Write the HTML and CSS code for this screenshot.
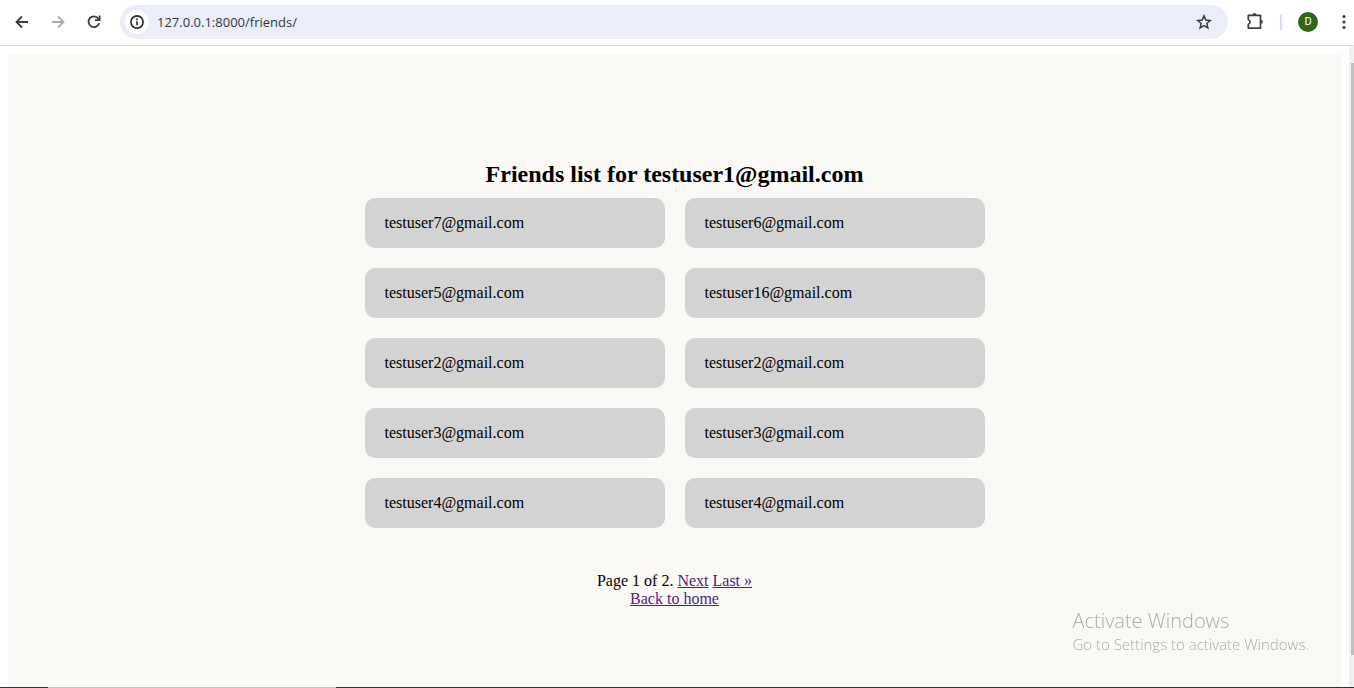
FILE: index.html
```html
<!DOCTYPE html>
<html lang="en">
<head>
<meta charset="utf-8">
<title>Friends</title>
<link rel="stylesheet" href="styles.css">
</head>
<body>
<header class="toolbar">
  <nav class="nav-buttons">
    <button class="icon-button" type="button" aria-label="Back">
      <svg width="14" height="14" viewBox="0 0 14 14" fill="none" stroke="#3c3d3f" stroke-width="1.8"><path d="M13 7H1.8M7 1.5 1.5 7 7 12.5"/></svg>
    </button>
    <button class="icon-button" type="button" aria-label="Forward">
      <svg width="14" height="14" viewBox="0 0 14 14" fill="none" stroke="#a9a9a9" stroke-width="1.8"><path d="M1 7h11.2M7 1.5 12.5 7 7 12.5"/></svg>
    </button>
    <button class="icon-button" type="button" aria-label="Reload">
      <svg width="14" height="14" viewBox="0 0 14 14" fill="none" stroke="#3c3d3f" stroke-width="1.8"><path d="M12.1 8.2A5.4 5.4 0 1 1 11.2 3.4L12.6 5"/><path d="M12.6 .5V5.2H8"/></svg>
    </button>
  </nav>
  <div class="address-bar">
    <button class="site-info" type="button" aria-label="Site information">
      <svg width="14" height="14" viewBox="0 0 14 14" fill="none" stroke="#27282a"><circle cx="7" cy="7" r="6.1" stroke-width="1.6"/><path d="M7 6.3v4M7 3.6v1.6" stroke-width="1.6"/></svg>
    </button>
    <input class="address" type="text" value="127.0.0.1:8000/friends/" aria-label="Address">
    <button class="icon-button" type="button" aria-label="Bookmark">
      <svg width="16" height="16" viewBox="0 0 16 16" fill="none" stroke="#3c3d3f" stroke-width="1.5"><path d="m8 1.9 1.75 4.2 4.55.4-3.45 3 1.05 4.45L8 11.6l-3.9 2.35L5.15 9.5 1.7 6.5l4.55-.4z"/></svg>
    </button>
  </div>
  <div class="actions">
    <button class="icon-button" type="button" aria-label="Extensions">
      <svg width="18" height="18" viewBox="0 0 18 18"><path d="M2.3 2.3h12.2v12.8H2.3v-3.9c2.3-.6 2.3-3.9 0-4.5z" fill="none" stroke="#3c3d3f" stroke-width="1.7" stroke-linejoin="round"/><path d="M6.4 2a2 1.9 0 0 1 4 0zM14.8 6.8a2 2 0 0 1 0 4z" fill="#3c3d3f"/></svg>
    </button>
    <span class="divider"></span>
    <button class="avatar" type="button">D</button>
    <button class="menu-button" type="button" aria-label="Menu">
      <svg width="4" height="16" viewBox="0 0 4 16" fill="#3c3d3f"><circle cx="2" cy="2.5" r="1.6"/><circle cx="2" cy="8" r="1.6"/><circle cx="2" cy="13.5" r="1.6"/></svg>
    </button>
  </div>
</header>
<div class="viewport">
  <main class="page">
    <h2 class="title">Friends list for testuser1@gmail.com</h2>
    <ul class="friends">
      <li class="friend">testuser7@gmail.com</li>
      <li class="friend">testuser6@gmail.com</li>
      <li class="friend">testuser5@gmail.com</li>
      <li class="friend">testuser16@gmail.com</li>
      <li class="friend">testuser2@gmail.com</li>
      <li class="friend">testuser2@gmail.com</li>
      <li class="friend">testuser3@gmail.com</li>
      <li class="friend">testuser3@gmail.com</li>
      <li class="friend">testuser4@gmail.com</li>
      <li class="friend">testuser4@gmail.com</li>
    </ul>
    <nav class="pagination">
      <div>Page 1 of 2. <a href="#next">Next</a> <a href="#last">Last »</a></div>
      <a href="#home">Back to home</a>
    </nav>
  </main>
  <div class="scrollbar"><div class="thumb"></div></div>
</div>
<div class="taskbar"><div class="taskbar-search"></div></div>
<aside class="watermark">
  <p class="watermark-title">Activate Windows</p>
  <p class="watermark-text">Go to Settings to activate Windows.</p>
</aside>
</body>
</html>
```
FILE: styles.css
```css
* {
  box-sizing: border-box;
}

body {
  display: flex;
  flex-direction: column;
  min-height: 100vh;
  margin: 0;
  background: #fff;
  color: #000;
  font: 16px/18px "Liberation Serif", "Times New Roman", serif;
}

button {
  display: flex;
  align-items: center;
  justify-content: center;
  padding: 0;
  border: 0;
  background: none;
}

.toolbar {
  display: flex;
  align-items: center;
  padding: 5px 8px 6px 12px;
  border-bottom: 1px solid #dcdddf;
  background: #fff;
}

.nav-buttons {
  display: flex;
  gap: 16px;
  margin-right: 16px;
}

.icon-button {
  width: 20px;
  height: 20px;
}

.address-bar {
  display: flex;
  flex: 1;
  align-items: center;
  height: 34px;
  padding: 0 14px 0 5px;
  border-radius: 17px;
  background: #ebeef8;
}

.site-info {
  width: 24px;
  height: 24px;
  border-radius: 50%;
  background: #fff;
}

.address {
  flex: 1;
  min-width: 0;
  padding: 0 8px;
  border: 0;
  outline: 0;
  background: none;
  color: #34363a;
  font: 13px/18px "Open Sans", "Noto Sans", sans-serif;
}

.actions {
  display: flex;
  align-items: center;
  margin-left: 17px;
}

.divider {
  width: 2px;
  height: 16px;
  margin: 0 16px 0 15px;
  background: #d0e0fc;
}

.avatar {
  width: 20px;
  height: 20px;
  border-radius: 50%;
  background: #31661a;
  color: #fff;
  font: 11px/20px Roboto, sans-serif;
}

.menu-button {
  width: 4px;
  height: 20px;
  margin-left: 24px;
}

.viewport {
  display: flex;
  flex: 1;
}

.page {
  display: flex;
  flex: 1;
  flex-direction: column;
  align-items: center;
  margin: 8px 8px 0;
  padding: 106px 20px 20px;
  background: #faf9f5;
}

.title {
  margin: 0 0 10px;
  font-size: 24px;
  line-height: 28px;
}

.friends {
  display: grid;
  grid-template-columns: repeat(2, 300px);
  gap: 20px;
  margin: 0 0 44px;
  padding: 0;
  list-style: none;
}

.friend {
  padding: 16px 20px;
  border-radius: 10px;
  background: #d3d3d3;
}

.pagination {
  text-align: center;
}

.pagination a {
  color: #551a8b;
}

.scrollbar {
  width: 5px;
  padding: 17px 0 32px 2px;
  background: #f1f1f1;
}

.thumb {
  height: 100%;
  background: #c1c1c1;
}

.taskbar {
  height: 1px;
  padding-left: 48px;
  background: #26343c;
}

.taskbar-search {
  width: 288px;
  height: 1px;
  background: #c0c0c0;
}

.watermark {
  position: fixed;
  right: 45px;
  bottom: 34px;
  color: #acacaa;
  font-family: "Open Sans", "Noto Sans", sans-serif;
  font-weight: 300;
}

.watermark p {
  margin: 0;
}

.watermark-title {
  font-size: 20px;
  line-height: 26px;
}

.watermark-text {
  font-size: 15px;
  line-height: 20px;
}
```
